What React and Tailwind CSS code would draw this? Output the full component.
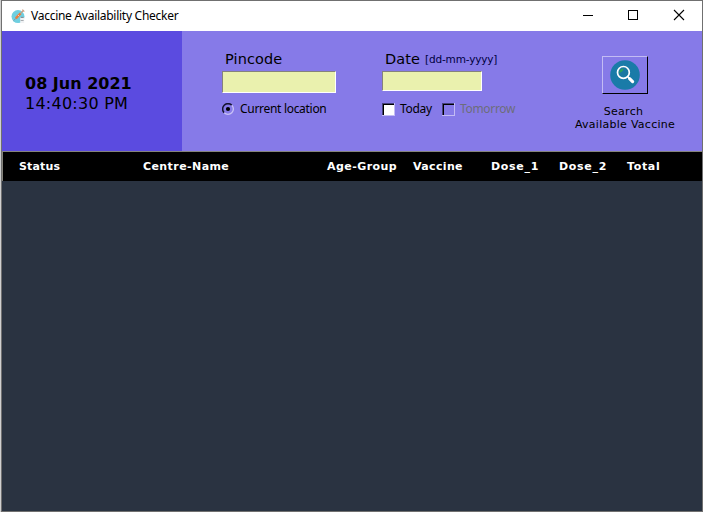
import React from "react";

const verdana = "font-['DejaVu_Sans',sans-serif]";
const segoe = "font-['Noto_Sans',sans-serif]";

function AppIcon() {
  return (
    <svg width="15" height="15" viewBox="0 0 15 15" className="shrink-0">
      <circle cx="7" cy="7.6" r="6.5" fill="#6fcfe0" />
      <path d="M2.6 11.6 L5 9.2" stroke="#8a8f98" strokeWidth="0.9" />
      <path d="M4.8 9.3 L9.6 4.4" stroke="#ea7f40" strokeWidth="2.4" />
      <path d="M7 6 L8.2 7.2" stroke="#fbe3cf" strokeWidth="0.8" />
      <path d="M9.6 4.4 L12.4 1.4 M11.4 0.7 L13.3 2.6" stroke="#cf9a7a" strokeWidth="1.2" />
      <rect x="9.2" y="8.6" width="4" height="5.4" fill="#f1f2f4" />
      <rect x="9.8" y="7.8" width="2.8" height="1.2" fill="#8b8f96" />
      <rect x="9.6" y="11" width="3" height="1" fill="#a6abb0" />
    </svg>
  );
}

function TitleBar() {
  return (
    <div className="flex h-[30px] items-center bg-white pl-[9px]">
      <AppIcon />
      <span className={`${segoe} ml-[5px] whitespace-nowrap text-[12px] leading-[16px] tracking-[-0.27px] text-black`}>
        Vaccine Availability Checker
      </span>
      <svg width="120" height="30" viewBox="0 0 120 30" className="ml-auto shrink-0" fill="none" stroke="#000" shapeRendering="crispEdges">
        <path d="M1 14.5 H11" />
        <rect x="46.5" y="9.5" width="9" height="9" />
        <path d="M92 9 L102 19 M102 9 L92 19" shapeRendering="auto" strokeWidth="1.1" />
      </svg>
    </div>
  );
}

function Clock() {
  return (
    <div className={`${verdana} w-[180px] shrink-0 bg-[#5b4be0] pl-[23px] pt-[43px] text-[16px] leading-[20px] text-black`}>
      <div className="whitespace-nowrap font-bold">08 Jun 2021</div>
      <div className="whitespace-nowrap tracking-[0.25px]">14:40:30 PM</div>
    </div>
  );
}

function Entry({ className }) {
  return (
    <div className={`border border-b-white border-l-[#85837c] border-r-white border-t-[#85837c] bg-[#eaf1ae] ${className}`} />
  );
}

function Radio() {
  return (
    <svg width="13" height="13" viewBox="0 0 13 13" className="shrink-0">
      <path d="M2.2 9.8 A5.2 5.2 0 0 1 9.8 2.2" fill="none" stroke="#15132e" strokeWidth="1.5" />
      <path d="M2.2 9.8 A5.2 5.2 0 0 0 9.8 2.2" fill="none" stroke="#c9c3f6" strokeWidth="1.3" />
      <circle cx="6" cy="6" r="2.1" fill="#000" />
    </svg>
  );
}

function Check({ fill }) {
  return (
    <svg width="13" height="13" viewBox="0 0 13 13" className="shrink-0" shapeRendering="crispEdges">
      <rect width="13" height="13" fill="#c3bcf4" />
      <path d="M0 0 H12 V1 H1 V12 H0 Z" fill="#44407a" />
      <rect x="1" y="1" width="11" height="11" fill="#000" />
      <rect x="2" y="2" width="10" height="10" fill={fill} />
    </svg>
  );
}

function SearchIcon() {
  return (
    <svg width="30" height="30" viewBox="0 0 30 30">
      <circle cx="15" cy="15" r="14.8" fill="#1a7ba8" />
      <circle cx="13.4" cy="12.4" r="5.9" fill="#1b78a2" stroke="#fff" strokeWidth="1.7" />
      <path d="M9.6 12.6 A4 4 0 0 1 13.2 8.9 L12.4 10.8 Z" fill="#2ba35a" stroke="#2ba35a" strokeWidth="0.8" />
      <path d="M17.6 16.6 L19.4 18.4" stroke="#fff" strokeWidth="1.4" />
      <path d="M19.6 18.7 L22.6 21.6" stroke="#fff" strokeWidth="3.2" strokeLinecap="round" />
    </svg>
  );
}

function Controls() {
  return (
    <div className="flex min-w-0 flex-1 items-start bg-[#867ae8] text-black">
      <div className="ml-[40px] w-[160px] shrink-0 pt-[18px]">
        <div className={`${verdana} h-[20px] whitespace-nowrap pl-[3px] text-[14.5px] leading-[20px] tracking-[0.1px]`}>Pincode</div>
        <Entry className="mt-[2px] h-[22px] w-[114px]" />
        <div className="mt-[8px] flex h-[16px] items-center">
          <Radio />
          <span className={`${segoe} ml-[5px] whitespace-nowrap text-[12px] leading-[16px] tracking-[-0.3px]`}>Current location</span>
        </div>
      </div>
      <div className="w-[180px] shrink-0 pt-[18px]">
        <div className={`${verdana} flex h-[20px] items-center whitespace-nowrap pl-[3px] leading-[20px]`}>
          <span className="text-[14.5px] tracking-[0.1px]">Date</span>
          <span className="ml-[5px] text-[10.5px] tracking-[-0.17px] text-[#000040]">[dd-mm-yyyy]</span>
        </div>
        <Entry className="mt-[2px] h-[20px] w-[100px]" />
        <div className={`${segoe} mt-[10px] flex h-[16px] items-center whitespace-nowrap text-[12px] leading-[16px] tracking-[-0.33px]`}>
          <Check fill="#fff" />
          <span className="ml-[5px] w-[42px]">Today</span>
          <Check fill="#867ae8" />
          <span className="ml-[5px] text-[#6d6d7b]">Tomorrow</span>
        </div>
      </div>
      <div className="flex w-[126px] shrink-0 flex-col items-center pt-[25px]">
        <button className="flex h-[38px] w-[46px] items-center justify-center border border-b-black border-l-[#c3bcf4] border-r-black border-t-[#c3bcf4]">
          <SearchIcon />
        </button>
        <div className={`${verdana} mt-[11px] whitespace-nowrap text-center text-[11px] leading-[13px] tracking-[0.27px]`}>
          <div className="pr-[3px]">Search</div>
          <div>Available Vaccine</div>
        </div>
      </div>
    </div>
  );
}

const columns = [
  ["Status", "w-[124px] tracking-[0.15px]"],
  ["Centre-Name", "w-[184px] tracking-[0.42px]"],
  ["Age-Group", "w-[86px] tracking-[0.45px]"],
  ["Vaccine", "w-[78px] tracking-[0.35px]"],
  ["Dose_1", "w-[68px] tracking-[0.7px]"],
  ["Dose_2", "w-[68px] tracking-[0.7px]"],
  ["Total", "w-[60px] tracking-[0.65px]"],
];

export default function App() {
  return (
    <div className="h-[512px] w-[703px] overflow-hidden border-l border-[#d0d0d0]">
      <div className="flex h-full flex-col border border-[#707070]">
        <TitleBar />
        <div className="flex h-[120px] shrink-0">
          <Clock />
          <Controls />
        </div>
        <div className={`${verdana} flex h-[30px] shrink-0 items-center border-l border-t border-[#85837c] bg-black pl-[16px] text-[11px] font-bold leading-[14px] text-white`}>
          {columns.map(([name, style]) => (
            <span key={name} className={`shrink-0 whitespace-nowrap ${style}`}>{name}</span>
          ))}
        </div>
        <div className="flex-1 bg-[#2a3341]" />
      </div>
    </div>
  );
}
